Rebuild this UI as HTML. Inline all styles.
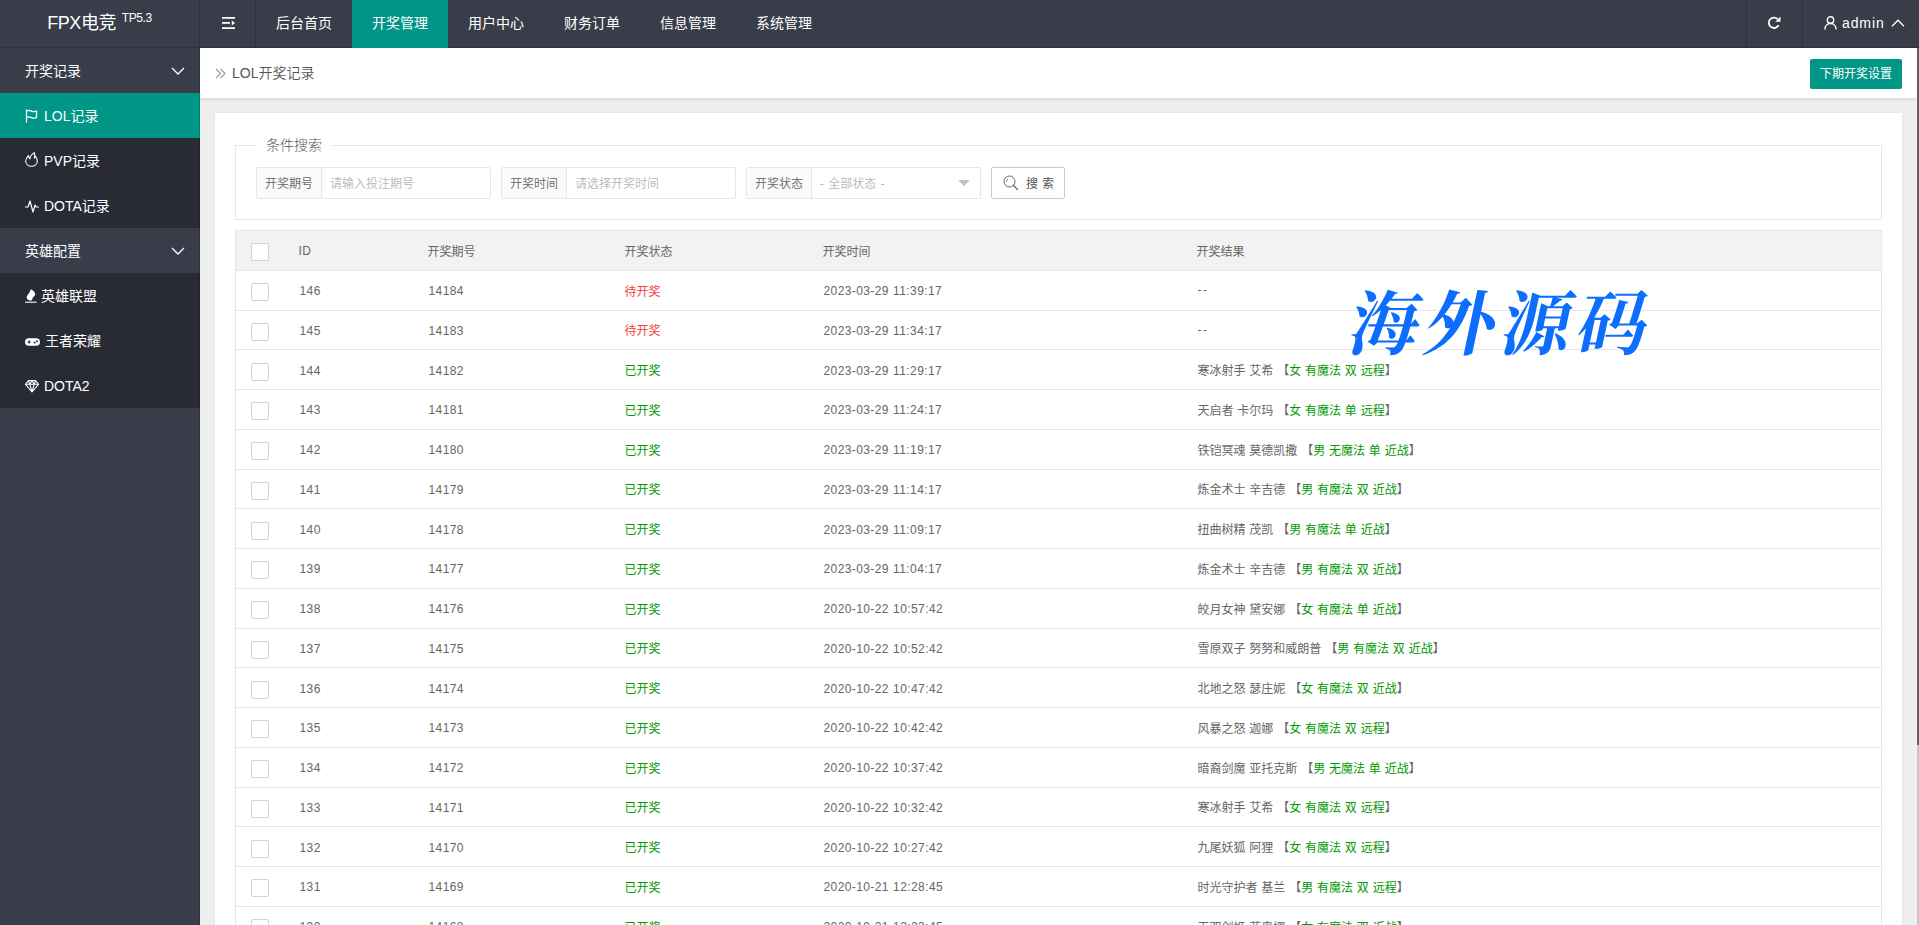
<!DOCTYPE html>
<html lang="zh-CN">
<head>
<meta charset="utf-8">
<title>FPX电竞</title>
<style>
*{box-sizing:border-box;margin:0;padding:0}
html,body{width:1919px;height:925px;overflow:hidden}
body{font-family:"Liberation Sans","Noto Sans CJK SC",sans-serif;font-size:14px;color:#333;background:#eee;position:relative}
a{text-decoration:none;color:inherit}
ul{list-style:none}
/* header */
.header{position:absolute;left:0;top:0;width:1919px;height:48px;background:#393d49;z-index:5}
.header:after{content:"";position:absolute;left:0;right:0;bottom:0;height:1px;background:#2f323c}
.logo{position:absolute;left:0;top:0;width:200px;height:48px;line-height:46px;text-align:center;color:#fff;font-size:18px;border-right:1px solid #2f323c;letter-spacing:-.4px}
.logo sup{font-size:12px;position:relative;top:-7px;vertical-align:baseline;margin-left:1px}
.topnav{position:absolute;left:200px;top:0;height:48px;display:flex}
.topnav li{height:48px;line-height:46px;color:#fff;font-size:14px;width:96px;text-align:center;position:relative;z-index:2}
.topnav li.fold{width:56px;border-right:1px solid #2f323c}
.topnav li.on{background:#009688}
.rnav{position:absolute;right:0;top:0;height:48px}
.rnav .it{position:absolute;top:0;height:48px;border-left:1px solid #2f323c}
/* side */
.side{position:absolute;left:0;top:48px;width:200px;height:877px;background:#393d49}
.side:after{content:"";position:absolute;right:0;top:0;width:1px;height:100%;background:rgba(0,0,0,.15)}
.side .p{height:45px;line-height:47px;color:#fff;padding-left:25px;font-size:14px;position:relative}
.side .p svg{position:absolute;right:15px;top:19px}
.side .c{height:45px;line-height:45px;color:#fff;padding-left:25px;font-size:14px;background:#282b33;position:relative;display:flex;align-items:center}
.side .c.on{background:#009688}
.side .c.last{border-radius:0 0 2px 2px}
.side .c svg{flex:none;margin-right:5px}
.side .c span{position:relative;top:1px}
/* body */
.main{position:absolute;left:200px;top:48px;width:1717px;height:877px;background:#eee;overflow:hidden}
.crumb{height:50px;background:#fff;box-shadow:0 1px 4px rgba(0,0,0,.12);position:relative;font-size:14px;color:#555;line-height:50px;padding-left:32px;font-weight:350}
.crumb .ar{position:absolute;left:15px;top:20px}
.btn{position:absolute;right:15px;top:11px;height:30px;line-height:31px;font-weight:400;width:92px;text-align:center;color:#fff;background:#009688;border-radius:2px;font-size:12px}
.card{position:absolute;left:15px;top:65px;width:1687px;height:900px;background:#fff;padding:20px;box-shadow:0 0 2px rgba(0,0,0,.08)}
fieldset{border:1px solid #e6e6e6;height:75px;position:relative;margin-top:12px}
legend{position:absolute;top:-13px;left:20px;padding:0 10px;font-size:14px;line-height:24px;background:#fff;color:#555;font-weight:300}
.grp{position:absolute;top:21px;height:32px;width:235px;border:1px solid #e6e6e6;border-radius:2px;display:flex;font-size:12px;background:#fff}
.grp .lb{width:65px;flex:none;background:#fbfbfb;border-right:1px solid #e6e6e6;text-align:center;line-height:32px;color:#666;font-weight:350}
.grp .in{word-spacing:1px;flex:1;line-height:32px;padding-left:8px;color:#b8b8b8;font-weight:350}
.sbtn{position:absolute;top:21px;left:755px;width:74px;height:32px;border:1px solid #c9c9c9;border-radius:2px;font-size:12px;color:#555;line-height:30px;background:#fff}
table{border-collapse:collapse;table-layout:fixed;width:1647px;margin-top:10px;font-size:12px;color:#666;font-weight:350;word-spacing:.5px}
th,td{border:1px solid #e6e6e6;border-left:none;border-right:none;text-align:left;padding:0 15px;font-weight:400;height:39.75px;white-space:nowrap}
table{border-left:1px solid #e6e6e6;border-right:1px solid #e6e6e6}
thead tr{background:#f2f2f2}
.ck{display:block;width:18px;height:18px;border:1px solid #d2d2d2;border-radius:2px;background:#fff;position:relative;top:2px}
.red{color:#f44040}.grn{color:#090}
.n{letter-spacing:.4px;padding-top:2px;padding-left:16px}
.d{letter-spacing:1.500px}
tbody td:last-child{padding-left:16px}
.wm{position:absolute;left:1352px;top:279px;font-family:"Noto Serif CJK SC","Noto Sans CJK SC",serif;font-weight:700;font-size:70px;color:#0d6efd;letter-spacing:6px;transform:skewX(-12deg);line-height:80px;z-index:9;white-space:nowrap}
.sb{position:absolute;left:1917px;top:48px;width:2px;height:877px;background:#c8c8c8}
.sb i{position:absolute;left:0;top:0;width:2px;height:697px;background:#606060}
</style>
</head>
<body>
<div class="header">
  <div class="logo">FPX电竞 <sup>TP5.3</sup></div>
  <ul class="topnav">
    <li class="fold"><svg width="13" height="12" viewBox="0 0 13 12" style="vertical-align:middle;position:relative;top:-1px;left:1px"><path d="M0 0h13v1.700H0zM0 5.100h8v1.700H0zM0 10.200h13v1.700H0zM9.800 3.400l3.200 2.550-3.200 2.550z" fill="#fff"/></svg></li>
    <li>后台首页</li>
    <li class="on">开奖管理</li>
    <li>用户中心</li>
    <li>财务订单</li>
    <li>信息管理</li>
    <li>系统管理</li>
  </ul>
  <div class="rnav">
    <div class="it" style="right:117px;width:56px"><svg width="14" height="14" viewBox="0 0 14 14" style="position:absolute;left:20px;top:16px"><path d="M11.6 9.2A5.2 5.2 0 1 1 10.6 3" fill="none" stroke="#fff" stroke-width="1.8"/><path d="M13.5 0.5v5.2H8.3z" fill="#fff"/></svg></div>
    <div class="it" style="right:0;width:117px;color:#fff;font-size:14px;line-height:46px">
      <svg width="13" height="14" viewBox="0 0 13 14" style="position:absolute;left:21px;top:16px"><circle cx="6.5" cy="4" r="3.2" fill="none" stroke="#fff" stroke-width="1.4"/><path d="M0.9 13.5c0-3.4 2.3-6 5.6-6s5.6 2.6 5.6 6" fill="none" stroke="#fff" stroke-width="1.4"/></svg>
      <span style="position:absolute;left:39px;top:0;letter-spacing:.9px">admin</span>
      <svg width="14" height="8" viewBox="0 0 14 8" style="position:absolute;left:88px;top:19px"><path d="M1 7.2l6-6 6 6" fill="none" stroke="#fff" stroke-width="1.3"/></svg>
    </div>
  </div>
</div>
<div class="side">
  <div class="p">开奖记录<svg width="14" height="8" viewBox="0 0 14 8"><path d="M1 1l6 6 6-6" fill="none" stroke="#fff" stroke-width="1.3"/></svg></div>
  <div class="c on"><svg width="14" height="14" viewBox="0 0 14 14"><path d="M1.5 0.5v13M1.5 2c2-1.2 3.5-.6 5 .1s3 1 5-.1v6.500c-2 1.100-3.500.800-5 .1s-3-1.300-5-.1" fill="none" stroke="#fff" stroke-width="1.300"/></svg><span>LOL记录</span></div>
  <div class="c"><svg width="13" height="15" viewBox="0 0 13 15" style="margin-right:6px;position:relative;top:-1px"><path d="M9.300 .600C6.500 2.500 5 4.200 5 6.800C4.200 6 3.600 4.800 3.400 3.600C1.600 5.500 .700 7.500 .700 9.300C.700 12.300 3.300 14.300 6.500 14.300S12.300 12.200 12.300 9C12.300 7 11.500 5.200 10.400 4C10.300 5 10 5.700 9.300 6.200C9.700 4 9.800 2 9.300 .600z" fill="none" stroke="#fff" stroke-width="1.100" stroke-linejoin="round"/></svg><span>PVP记录</span></div>
  <div class="c"><svg width="14" height="14" viewBox="0 0 14 14"><path d="M0 8h3l2-6 3 11 2-7 1 2h3" fill="none" stroke="#fff" stroke-width="1.200" stroke-linejoin="round"/></svg><span>DOTA记录</span></div>
  <div class="p">英雄配置<svg width="14" height="8" viewBox="0 0 14 8"><path d="M1 1l6 6 6-6" fill="none" stroke="#fff" stroke-width="1.300"/></svg></div>
  <div class="c"><svg width="12" height="14" viewBox="0 0 12 14" style="margin-right:4px"><path d="M5.600 .200C8.500 1.400 10.400 3.300 10.200 5.400C10 7.300 7.400 8 7.300 10C7.300 10.900 6.900 11.500 6 11.600C3.500 11.800 1.600 10.200 1.700 8C1.800 5.500 5 4.600 5.600 .200z" fill="#fff"/><path d="M0 13.200h11.600" stroke="#fff" stroke-width="1.100"/></svg><span>英雄联盟</span></div>
  <div class="c"><svg width="15" height="14" viewBox="0 0 15 14" style="position:relative;top:1px"><rect x="0" y="3.200" width="15" height="7.600" rx="3.800" fill="#fff"/><path d="M2.600 7h3.200M4.200 5.400v3.200" stroke="#282b33" stroke-width="1.200"/><circle cx="9.600" cy="7.600" r="1" fill="#282b33"/><circle cx="12" cy="6.200" r="1" fill="#282b33"/></svg><span>王者荣耀</span></div>
  <div class="c"><svg width="14" height="14" viewBox="0 0 14 14"><path d="M3.500 1.500h7l3 3.800L7 13 .5 5.300z M.5 5.300h13M4.800 5.300L7 12.500l2.200-7.200M3.500 1.500l1.300 3.800L7 1.500l2.200 3.800 1.300-3.800" fill="none" stroke="#fff" stroke-width="1.100" stroke-linejoin="round"/></svg><span>DOTA2</span></div>
</div>
<div class="main">
  <div class="crumb"><svg class="ar" width="11" height="11" viewBox="0 0 11 11"><path d="M1 1l4.500 4.500L1 10M5.500 1L10 5.500 5.500 10" fill="none" stroke="#999" stroke-width="1.100"/></svg>LOL开奖记录<div class="btn">下期开奖设置</div></div>
  <div class="card">
    <fieldset>
      <legend>条件搜索</legend>
      <div class="grp" style="left:20px"><div class="lb">开奖期号</div><div class="in">请输入投注期号</div></div>
      <div class="grp" style="left:265px"><div class="lb">开奖时间</div><div class="in">请选择开奖时间</div></div>
      <div class="grp" style="left:510px"><div class="lb">开奖状态</div><div class="in">- 全部状态 -</div><svg width="12" height="6" viewBox="0 0 12 6" style="position:absolute;right:10px;top:12px"><path d="M0 0h12L6 6z" fill="#c2c2c2"/></svg></div>
      <div class="sbtn"><svg width="16" height="16" viewBox="0 0 16 16" style="position:absolute;left:11px;top:7px"><circle cx="6.500" cy="6.500" r="5.500" fill="none" stroke="#666" stroke-width="1"/><path d="M10.500 10.500l4 4" stroke="#666" stroke-width="1.300" stroke-linecap="round"/><path d="M3.500 6.500a3 3 0 0 1 1.500-2.600" fill="none" stroke="#666" stroke-width=".8"/></svg><span style="position:absolute;left:34px;top:1px;letter-spacing:4px">搜索</span></div>
    </fieldset>
    <table id="tb">
      <colgroup><col style="width:48px"><col style="width:129px"><col style="width:197px"><col style="width:198px"><col style="width:374px"><col></colgroup>
      <thead><tr><th><span class="ck"></span></th><th class="n" style="padding-left:15px">ID</th><th>开奖期号</th><th>开奖状态</th><th>开奖时间</th><th>开奖结果</th></tr></thead>
      <tbody>
<tr><td><span class="ck"></span></td><td class="n">146</td><td class="n">14184</td><td class="red">待开奖</td><td class="n">2023-03-29 11:39:17</td><td class="d">--</td></tr>
<tr><td><span class="ck"></span></td><td class="n">145</td><td class="n">14183</td><td class="red">待开奖</td><td class="n">2023-03-29 11:34:17</td><td class="d">--</td></tr>
<tr><td><span class="ck"></span></td><td class="n">144</td><td class="n">14182</td><td class="grn">已开奖</td><td class="n">2023-03-29 11:29:17</td><td>寒冰射手 艾希 【<span class="grn">女 有魔法 双 远程</span>】</td></tr>
<tr><td><span class="ck"></span></td><td class="n">143</td><td class="n">14181</td><td class="grn">已开奖</td><td class="n">2023-03-29 11:24:17</td><td>天启者 卡尔玛 【<span class="grn">女 有魔法 单 远程</span>】</td></tr>
<tr><td><span class="ck"></span></td><td class="n">142</td><td class="n">14180</td><td class="grn">已开奖</td><td class="n">2023-03-29 11:19:17</td><td>铁铠冥魂 莫德凯撒 【<span class="grn">男 无魔法 单 近战</span>】</td></tr>
<tr><td><span class="ck"></span></td><td class="n">141</td><td class="n">14179</td><td class="grn">已开奖</td><td class="n">2023-03-29 11:14:17</td><td>炼金术士 辛吉德 【<span class="grn">男 有魔法 双 近战</span>】</td></tr>
<tr><td><span class="ck"></span></td><td class="n">140</td><td class="n">14178</td><td class="grn">已开奖</td><td class="n">2023-03-29 11:09:17</td><td>扭曲树精 茂凯 【<span class="grn">男 有魔法 单 近战</span>】</td></tr>
<tr><td><span class="ck"></span></td><td class="n">139</td><td class="n">14177</td><td class="grn">已开奖</td><td class="n">2023-03-29 11:04:17</td><td>炼金术士 辛吉德 【<span class="grn">男 有魔法 双 近战</span>】</td></tr>
<tr><td><span class="ck"></span></td><td class="n">138</td><td class="n">14176</td><td class="grn">已开奖</td><td class="n">2020-10-22 10:57:42</td><td>皎月女神 黛安娜 【<span class="grn">女 有魔法 单 近战</span>】</td></tr>
<tr><td><span class="ck"></span></td><td class="n">137</td><td class="n">14175</td><td class="grn">已开奖</td><td class="n">2020-10-22 10:52:42</td><td>雪原双子 努努和威朗普 【<span class="grn">男 有魔法 双 近战</span>】</td></tr>
<tr><td><span class="ck"></span></td><td class="n">136</td><td class="n">14174</td><td class="grn">已开奖</td><td class="n">2020-10-22 10:47:42</td><td>北地之怒 瑟庄妮 【<span class="grn">女 有魔法 双 近战</span>】</td></tr>
<tr><td><span class="ck"></span></td><td class="n">135</td><td class="n">14173</td><td class="grn">已开奖</td><td class="n">2020-10-22 10:42:42</td><td>风暴之怒 迦娜 【<span class="grn">女 有魔法 双 远程</span>】</td></tr>
<tr><td><span class="ck"></span></td><td class="n">134</td><td class="n">14172</td><td class="grn">已开奖</td><td class="n">2020-10-22 10:37:42</td><td>暗裔剑魔 亚托克斯 【<span class="grn">男 无魔法 单 近战</span>】</td></tr>
<tr><td><span class="ck"></span></td><td class="n">133</td><td class="n">14171</td><td class="grn">已开奖</td><td class="n">2020-10-22 10:32:42</td><td>寒冰射手 艾希 【<span class="grn">女 有魔法 双 远程</span>】</td></tr>
<tr><td><span class="ck"></span></td><td class="n">132</td><td class="n">14170</td><td class="grn">已开奖</td><td class="n">2020-10-22 10:27:42</td><td>九尾妖狐 阿狸 【<span class="grn">女 有魔法 双 远程</span>】</td></tr>
<tr><td><span class="ck"></span></td><td class="n">131</td><td class="n">14169</td><td class="grn">已开奖</td><td class="n">2020-10-21 12:28:45</td><td>时光守护者 基兰 【<span class="grn">男 有魔法 双 远程</span>】</td></tr>
<tr><td><span class="ck"></span></td><td class="n">130</td><td class="n">14168</td><td class="grn">已开奖</td><td class="n">2020-10-21 12:23:45</td><td>无双剑姬 菲奥娜 【<span class="grn">女 有魔法 双 近战</span>】</td></tr>
      </tbody>
    </table>
  </div>
</div>
<div class="wm">海外源码</div>
<div class="sb"><i></i></div>
</body>
</html>
